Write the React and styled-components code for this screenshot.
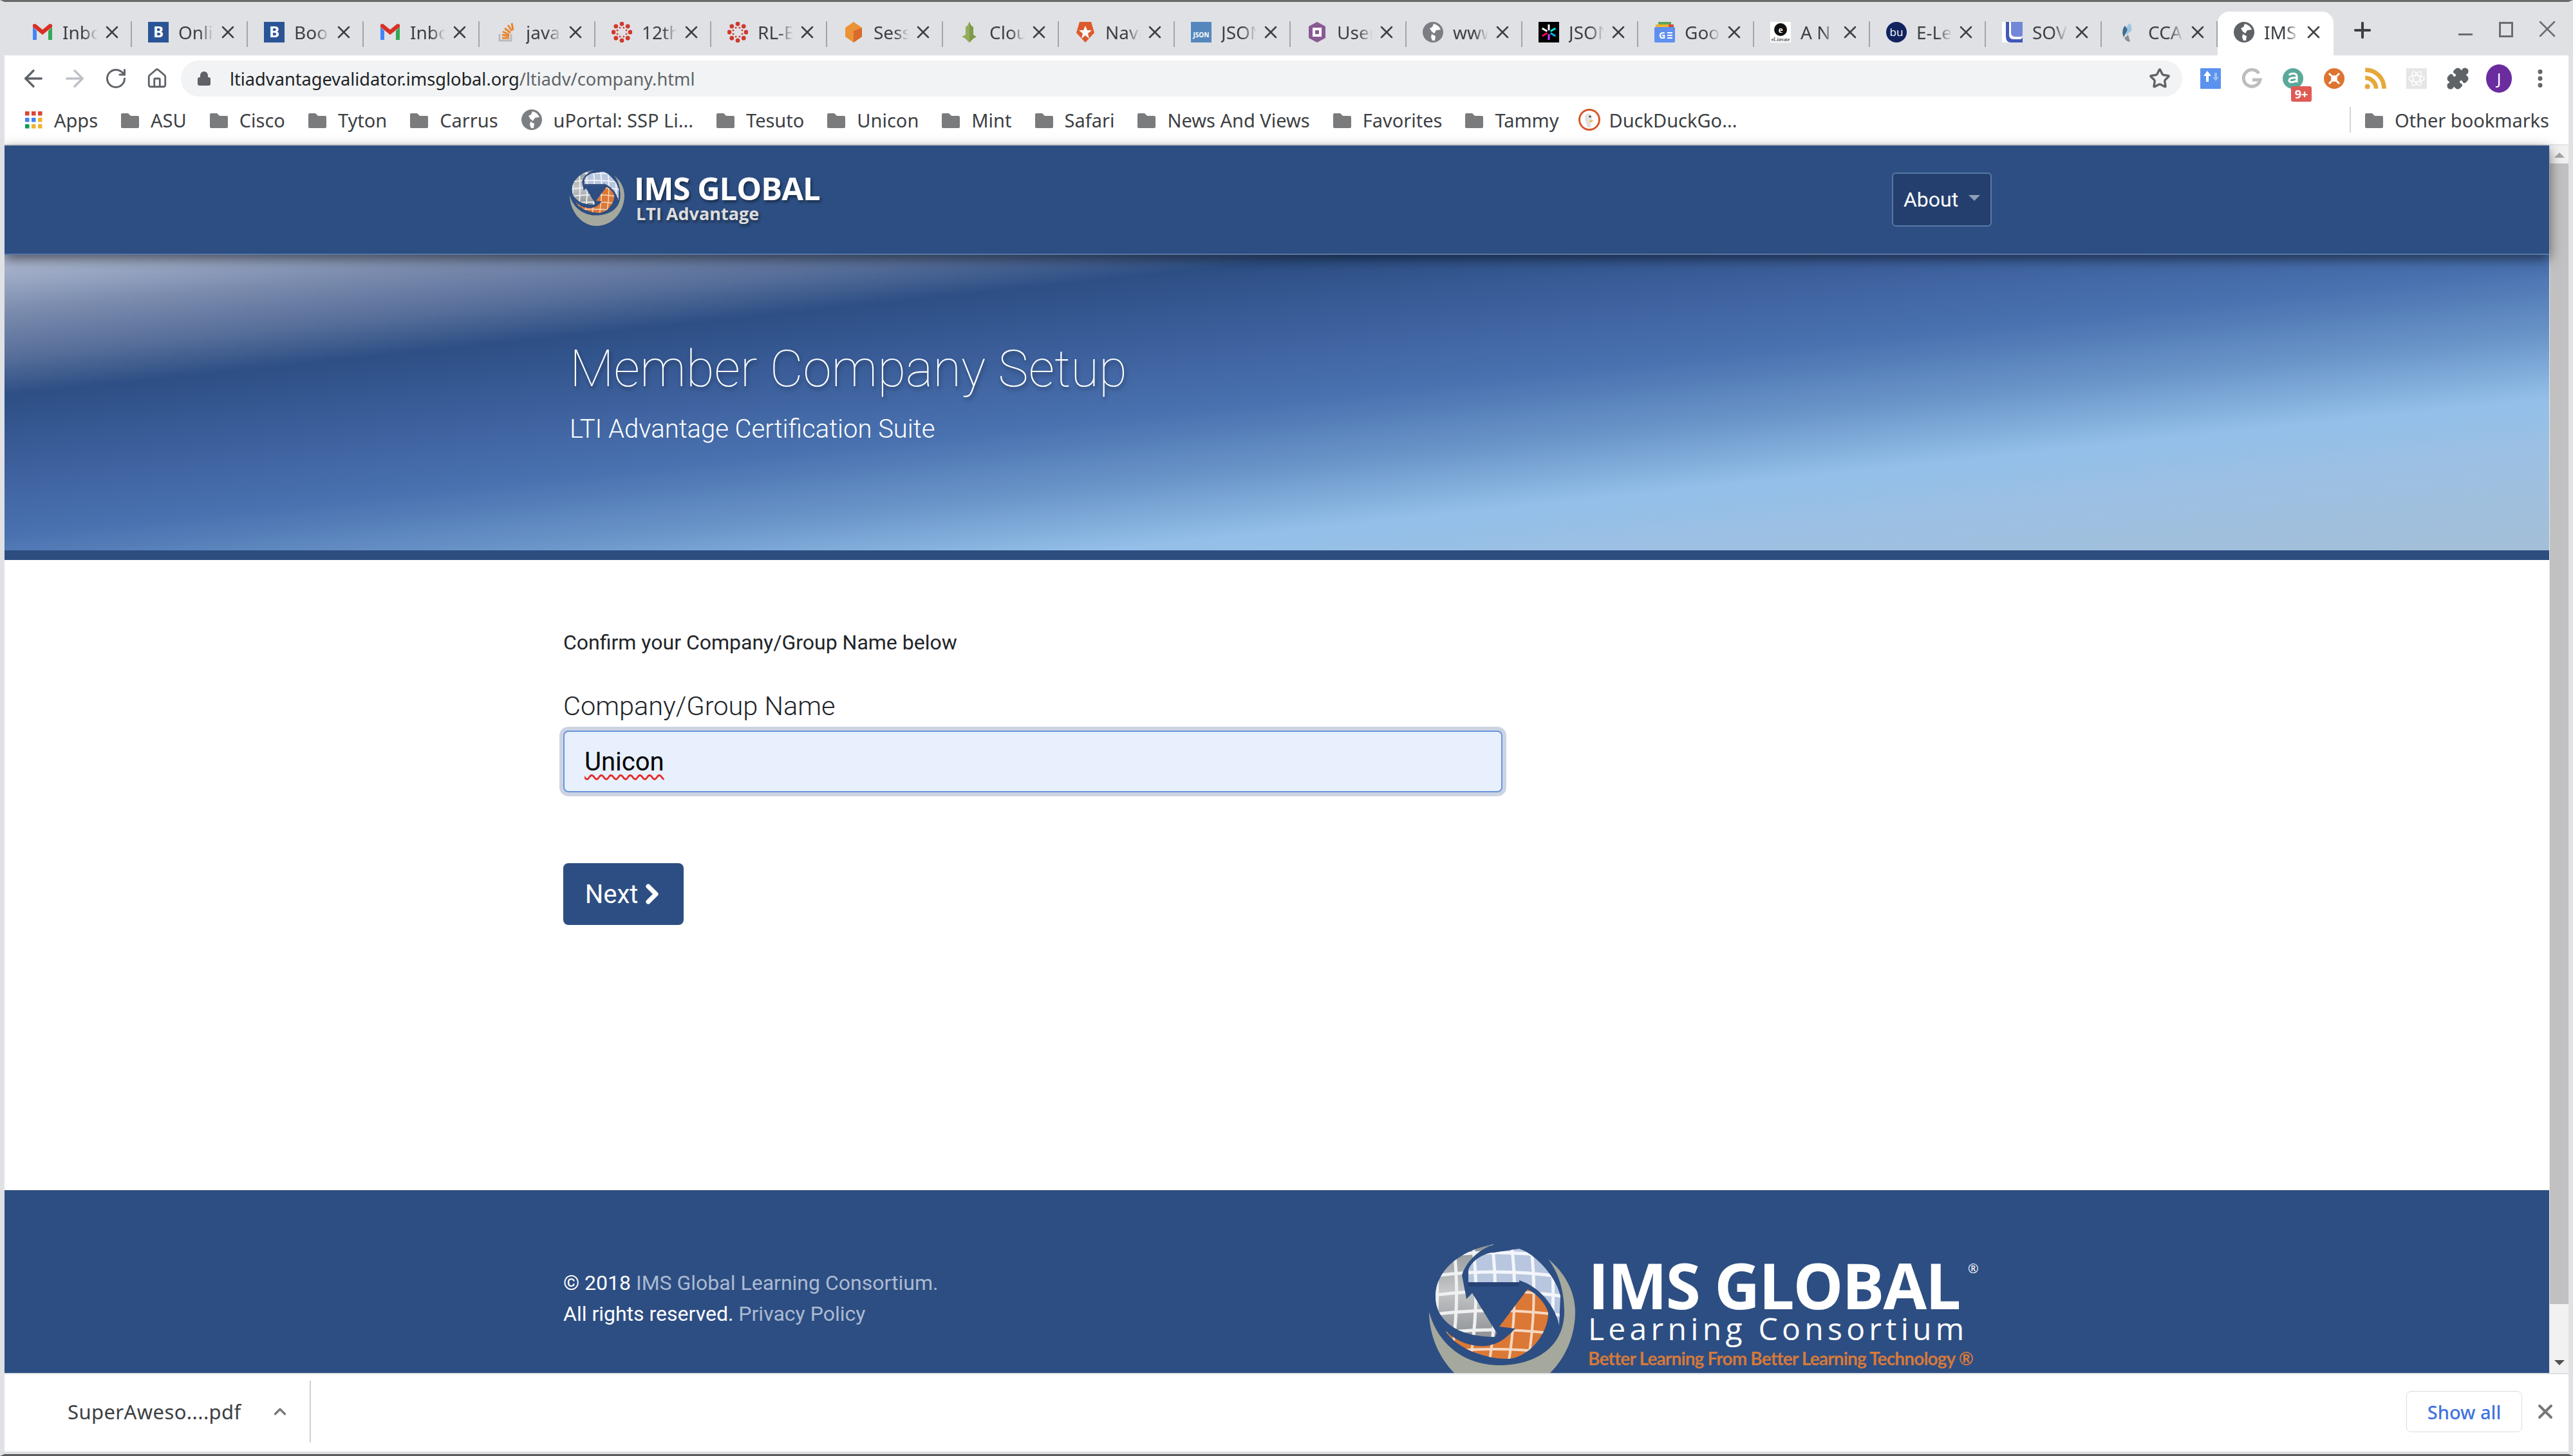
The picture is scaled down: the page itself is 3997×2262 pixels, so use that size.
import styled, { createGlobalStyle } from 'styled-components';
import { ArrowLeft, ArrowRight, RotateCw, Home, Star, Puzzle, MoreVertical, X, Plus, ChevronUp, ChevronRight, Lock } from 'lucide-react';

const GlobalStyle = createGlobalStyle`
  html, body { margin: 0; padding: 0; background: #fff; }
  * { box-sizing: border-box; }
`;

const uiFont = `"Noto Sans", "Open Sans", sans-serif`;
const navy = '#2d4e82';

const Window = styled.div`
  width: 3997px;
  height: 2262px;
  display: flex;
  flex-direction: column;
  overflow: hidden;
  background: #dfe1e5;
  border-top: 3px solid #6a6a6a;
  border-bottom: 3px solid #5c5c5c;
  border-left: 7px solid #dfe1e5;
  border-right: 7px solid #dfe1e5;
  font-family: ${uiFont};
`;

const TabStrip = styled.div`
  height: 83px;
  flex: none;
  display: flex;
  padding-left: 18px;
  position: relative;
`;

const Tab = styled.div`
  width: 180px;
  height: 68px;
  margin-top: 15px;
  flex: none;
  display: flex;
  align-items: center;
  padding: 0 0 4px 25px;
  position: relative;
  background: ${p => (p.$active ? '#fff' : 'transparent')};
  border-radius: 18px 18px 0 0;
  &::after {
    content: '';
    position: absolute;
    right: 0;
    top: 15px;
    height: 40px;
    width: 2px;
    background: ${p => (p.$plain ? 'transparent' : '#a2a5a9')};
  }
`;

const TabIcon = styled.span`
  width: 32px;
  height: 32px;
  flex: none;
  display: block;
`;

const TabTitle = styled.span`
  width: 55px;
  margin-left: 15px;
  flex: none;
  overflow: hidden;
  white-space: nowrap;
  font-size: 28px;
  color: #3c4043;
  -webkit-mask-image: linear-gradient(90deg, #000 60%, transparent 100%);
  mask-image: linear-gradient(90deg, #000 60%, transparent 100%);
`;

const TabClose = styled.span`
  margin: 0 -6px 0 6px;
  display: flex;
  color: #3c4043;
`;

const NewTab = styled.div`
  margin: 25px 0 0 26px;
  height: 40px;
  display: flex;
  color: #3c4043;
`;

const WindowControls = styled.div`
  margin-left: auto;
  display: flex;
  gap: 41px;
  padding: 26px 21px 0 0;
  color: #6a6d70;
`;

const MinIcon = styled.span`
  width: 22px;
  height: 3px;
  margin-top: 23px;
  background: #6a6d70;
`;

const MaxIcon = styled.span`
  width: 22px;
  height: 24px;
  margin-top: 5px;
  border: 3px solid #6a6d70;
`;

const WindowClose = styled.span`
  width: 44px;
  height: 44px;
  margin: -6px -10px 0;
  display: flex;
`;

const Toolbar = styled.div`
  height: 64px;
  flex: none;
  display: flex;
  align-items: center;
  background: #fff;
  padding: 8px 0 0 26px;
`;

const NavButton = styled.span`
  width: 38px;
  height: 38px;
  margin-right: 26px;
  flex: none;
  display: flex;
  align-items: center;
  justify-content: center;
  color: ${p => (p.$off ? '#bdc1c6' : '#5f6368')};
  svg { flex: none; }
`;

const AddressPill = styled.div`
  width: 3109px;
  height: 56px;
  margin-left: -8px;
  flex: none;
  border-radius: 28px;
  background: #f1f3f4;
  display: flex;
  align-items: center;
  padding: 0 18px 0 24px;
  font-size: 27.2px;
  color: #202124;
`;

const UrlPath = styled.span`
  color: #5f6368;
`;

const LockSlot = styled.span`
  display: flex;
  margin-right: 28px;
  color: #5f6368;
`;

const StarSlot = styled.span`
  margin-left: auto;
  display: flex;
  color: #5f6368;
`;

const ExtensionRow = styled.div`
  display: flex;
  align-items: center;
  gap: 24px;
  margin-left: 24px;
`;

const ExtensionSlot = styled.span`
  width: 40px;
  height: 40px;
  flex: none;
  display: flex;
  align-items: center;
  justify-content: center;
  position: relative;
  color: #5f6368;
`;

const CountBadge = styled.span`
  position: absolute;
  right: -9px;
  bottom: -16px;
  width: 32px;
  height: 24px;
  border-radius: 3px;
  background: #df5a55;
  color: #fff;
  font-size: 18px;
  font-weight: 700;
  line-height: 24px;
  text-align: center;
`;

const Avatar = styled.span`
  width: 44px;
  height: 44px;
  border-radius: 50%;
  background: #6a2c9e;
  color: #fff;
  font-size: 24px;
  line-height: 44px;
  text-align: center;
`;

const BookmarkBar = styled.div`
  height: 76px;
  flex: none;
  display: flex;
  align-items: center;
  gap: 36px;
  padding: 0 30px 2px 32px;
  background: #fff;
  border-bottom: 2px solid #e3e3e3;
`;

const Bookmark = styled.div`
  display: flex;
  align-items: center;
  gap: 18px;
  font-size: 29px;
  color: #3c4043;
  white-space: nowrap;
`;

const DuckBookmark = styled(Bookmark)`
  gap: 14px;
  margin-left: -6px;
`;

const OtherBookmarks = styled(Bookmark)`
  margin-left: auto;
  padding-left: 22px;
  border-left: 2px solid #d5d5d5;
  height: 40px;
`;

const Viewport = styled.div`
  flex: 1;
  min-height: 0;
  display: flex;
`;

const Page = styled.div`
  flex: 1;
  min-width: 0;
  display: flex;
  flex-direction: column;
  background: #fff;
  font-family: Roboto, sans-serif;
`;

const Navbar = styled.header`
  height: 170px;
  flex: none;
  display: flex;
  align-items: center;
  justify-content: space-between;
  padding: 0 866px 0 878px;
  background: ${navy};
  border-bottom: 2px solid #5a78a6;
  box-shadow: 0 6px 18px rgba(0, 0, 0, 0.55);
  position: relative;
  z-index: 1;
`;

const BrandLogo = styled.div`
  display: flex;
  align-items: center;
  gap: 15px;
  margin-top: -6px;
`;

const BrandText = styled.div`
  display: flex;
  flex-direction: column;
  font-family: "Open Sans", sans-serif;
  font-weight: 700;
  text-shadow: 2px 3px 4px rgba(0, 0, 0, 0.45);
`;

const BrandName = styled.span`
  font-size: 49px;
  line-height: 50px;
  letter-spacing: -1px;
  color: #fff;
`;

const BrandSub = styled.span`
  font-size: 27px;
  line-height: 30px;
  color: #ddd;
  padding-left: 3px;
`;

const AboutButton = styled.button`
  width: 155px;
  height: 84px;
  display: flex;
  align-items: center;
  justify-content: center;
  gap: 16px;
  padding: 0;
  background: #243f6d;
  border: 2px solid #557aa6;
  border-radius: 6px;
  color: #fff;
  font-family: Roboto, sans-serif;
  font-size: 32px;
`;

const Caret = styled.span`
  width: 0;
  height: 0;
  margin-top: -6px;
  border-left: 9px solid transparent;
  border-right: 9px solid transparent;
  border-top: 9px solid #8f9fb8;
`;

const Hero = styled.section`
  height: 474px;
  flex: none;
  padding: 129px 0 0 878px;
  border-bottom: 15px solid #2d4d80;
  background: linear-gradient(
    174deg,
    #a8b4cd 2%,
    #7b8cae 10%,
    #586f9a 18%,
    #2d4f85 25%,
    #3b5e9a 36%,
    #4a72b0 50%,
    #6b96c9 62%,
    #93bfe9 73%,
    #9dc0e2 84%,
    #a3bed7 100%
  );
`;

const HeroTitle = styled.h1`
  margin: 0;
  font-weight: 100;
  font-size: 80px;
  line-height: 96px;
  color: #fff;
  text-shadow: 2px 4px 6px rgba(0, 0, 0, 0.4);
`;

const HeroSub = styled.p`
  margin: 22px 0 0;
  font-weight: 300;
  font-size: 40px;
  line-height: 48px;
  color: #fff;
`;

const Main = styled.main`
  flex: 1;
  padding: 104px 0 0 868px;
`;

const Intro = styled.p`
  margin: 0;
  font-size: 32px;
  line-height: 48px;
  color: #212529;
`;

const FieldLabel = styled.label`
  display: block;
  margin-top: 47px;
  font-size: 41.5px;
  font-weight: 300;
  line-height: 56px;
  color: #212529;
`;

const NameField = styled.div`
  width: 1459px;
  height: 96px;
  margin-top: 10px;
  display: flex;
  align-items: center;
  padding: 0 31px;
  background: #e8f0fe;
  border: 2px solid #6a94df;
  border-radius: 8px;
  box-shadow: 0 0 0 6px #ccd4e2;
  font-size: 40px;
  color: #000;
`;

const MisspelledWord = styled.span`
  text-decoration: underline wavy #e2302c 2.5px;
  text-underline-offset: 6px;
`;

const NextButton = styled.button`
  width: 187px;
  height: 96px;
  margin-top: 110px;
  display: flex;
  align-items: center;
  justify-content: center;
  padding: 0 0 0 3px;
  background: ${navy};
  border: 0;
  border-radius: 8px;
  color: #fff;
  font-family: Roboto, sans-serif;
  font-size: 40px;
`;

const NextChevron = styled.span`
  display: flex;
  margin: 0 -6px 0 -2px;
`;

const Footer = styled.footer`
  height: 284px;
  flex: none;
  display: flex;
  overflow: hidden;
  padding: 120px 0 0 868px;
  background: ${navy};
  font-size: 32px;
  line-height: 48px;
  color: #fff;
`;

const FooterLink = styled.span`
  color: #abbad2;
`;

const FooterCopy = styled.div`
  width: 1345px;
  flex: none;
`;

const FooterLogo = styled.div`
  display: flex;
  gap: 20px;
  margin-top: -36px;
  height: 200px;
  overflow: hidden;
  flex: none;
  font-family: "Open Sans", sans-serif;
`;

const FooterLogoText = styled.div`
  display: flex;
  flex-direction: column;
  position: relative;
  width: 620px;
  padding-top: 21px;
`;

const FooterBrand = styled.div`
  font-size: 98px;
  font-weight: 700;
  line-height: 85px;
  letter-spacing: -2px;
  white-space: nowrap;
`;

const Registered = styled.span`
  position: absolute;
  top: 28px;
  left: 590px;
  font-size: 20px;
  line-height: 20px;
  font-weight: 400;
`;

const FooterOrg = styled.div`
  font-size: 48px;
  line-height: 50px;
  letter-spacing: 6.3px;
  white-space: nowrap;
`;

const FooterTag = styled.div`
  margin-top: 4px;
  font-family: Lato, sans-serif;
  font-size: 28px;
  line-height: 34px;
  font-weight: 700;
  letter-spacing: -0.85px;
  color: #d6793a;
  white-space: nowrap;
`;

const Scrollbar = styled.div`
  width: 30px;
  flex: none;
  display: flex;
  flex-direction: column;
  align-items: center;
  background: #f1f1f1;
  border-left: 1px solid #e8e8e8;
`;

const ScrollArrow = styled.span`
  width: 0;
  height: 0;
  margin: ${p => (p.$down ? 'auto 0 12px' : '11px 0 9px')};
  border-left: 8px solid transparent;
  border-right: 8px solid transparent;
  border-top: ${p => (p.$down ? '8px solid #505050' : '0')};
  border-bottom: ${p => (p.$down ? '0' : '8px solid #a3a3a3')};
`;

const ScrollThumb = styled.div`
  width: 100%;
  height: 1772px;
  background: #c1c1c1;
`;

const DownloadBar = styled.div`
  height: 122px;
  flex: none;
  display: flex;
  align-items: center;
  margin-bottom: 4px;
  padding: 0 0 4px 98px;
  background: #fff;
  border-top: 2px solid #dfe1e5;
  font-size: 31px;
  letter-spacing: 0.4px;
  color: #3c4043;
`;

const FileName = styled.span`
  width: 315px;
  flex: none;
  white-space: nowrap;
`;

const DownloadChevron = styled.span`
  display: flex;
  color: #777;
`;

const DownloadDivider = styled.span`
  width: 2px;
  height: 96px;
  margin-left: 31px;
  background: #cfcfcf;
`;

const ShowAll = styled.button`
  width: 180px;
  height: 64px;
  margin-left: auto;
  background: #fff;
  border: 1.5px solid #dadce0;
  border-radius: 8px;
  color: #4273dd;
  font-family: ${uiFont};
  font-size: 29px;
  font-weight: 500;
  padding: 0;
`;

const DownloadClose = styled.span`
  width: 72px;
  display: flex;
  justify-content: center;
  color: #777;
`;

// favicons, drawn roughly at the size chrome shows them
function Gmail() {
  return (
    <svg viewBox="0 0 32 32" width="32" height="32">
      <path d="M1 8v20h6V14z" fill="#4285f4" />
      <path d="M31 8v20h-6V14z" fill="#34a853" />
      <path d="M1 8l15 12L31 8v-4l-4 -1 -11 9L5 3 1 4z" fill="#d93025" />
    </svg>
  );
}

function LetterSquare({ bg, fg, text, size = 24 }) {
  return (
    <svg viewBox="0 0 32 32" width="32" height="32">
      <rect width="32" height="32" fill={bg} />
      <text x="16" y="24" textAnchor="middle" fontSize={size} fontWeight="700" fontFamily="Open Sans" fill={fg}>{text}</text>
    </svg>
  );
}

function StackOverflow() {
  return (
    <svg viewBox="0 0 32 32" width="32" height="32" fill="none">
      <path d="M6 19v10h18V19" stroke="#bcbbbb" strokeWidth="3" />
      <path d="M10 25h11M10 20l11 2M11 15l10 5M14 10l9 7M19 5l6 9M25 2l2 11" stroke="#e8862e" strokeWidth="3" />
    </svg>
  );
}

function Canvas() {
  const dots = [...Array(8).keys()].map(i => (i * Math.PI) / 4);
  return (
    <svg viewBox="0 0 32 32" width="32" height="32" fill="#d1392c">
      {dots.map((a, i) => (
        <g key={i}>
          <circle cx={16 + 13 * Math.cos(a)} cy={16 + 13 * Math.sin(a)} r="3.4" />
          <circle cx={16 + 7.5 * Math.cos(a + 0.39)} cy={16 + 7.5 * Math.sin(a + 0.39)} r="1.4" />
        </g>
      ))}
    </svg>
  );
}

function Hexagon() {
  return (
    <svg viewBox="0 0 32 32" width="32" height="32">
      <path d="M16 0l13 9v14l-13 9-13-9V9z" fill="#ec9237" />
      <path d="M16 14l13-5v14l-13 9z" fill="#d96a2c" />
    </svg>
  );
}

function Bell() {
  return (
    <svg viewBox="0 0 32 32" width="32" height="32">
      <path d="M16 0l3 6 3 2v12l5 3-5 3-6 6-6-6-5-3 5-3V8l3-2z" fill="#7d9a48" />
      <path d="M16 0v32l-6-6-5-3 5-3V8l3-2z" fill="#93ad5c" />
    </svg>
  );
}

function Auth0() {
  return (
    <svg viewBox="0 0 32 32" width="32" height="32">
      <path d="M7 0h18l5 17-14 15L2 17z" fill="#dd5a2c" />
      <path d="M16 6l3 7h7l-6 5 2 8-6-5-6 5 2-8-6-5h7z" fill="#fff" />
    </svg>
  );
}

function OneNote() {
  return (
    <svg viewBox="0 0 32 32" width="32" height="32">
      <path d="M16 0l13 7v18l-13 7-13-7V7z" fill="#8a5a94" />
      <rect x="9" y="9" width="14" height="14" fill="#fff" />
      <rect x="13" y="13" width="6" height="6" fill="#8a5a94" />
    </svg>
  );
}

function GlobeGlyph({ color = '#7b7e82' }) {
  return (
    <svg viewBox="0 0 32 32" width="32" height="32">
      <circle cx="16" cy="16" r="16" fill={color} />
      <path d="M17 3c5 1 9 4 11 9l-7 1-3 5-4-3-3-5 4-2zM14 19l6 3-1 7-4 0-2-5z" fill="#fff" />
    </svg>
  );
}

function Jwt() {
  const spokes = [
    ['#fff', 0], ['#00f2e6', 60], ['#00b9f1', 120], ['#d63aff', 180], ['#fb015b', 240], ['#fff', 300],
  ];
  return (
    <svg viewBox="0 0 32 32" width="32" height="32">
      <rect width="32" height="32" fill="#000" />
      {spokes.map(([c, a]) => (
        <rect key={a} x="14.5" y="4" width="3" height="9" fill={c} transform={`rotate(${a} 16 16)`} />
      ))}
    </svg>
  );
}

function GoogleDocs() {
  return (
    <svg viewBox="0 0 32 32" width="32" height="32">
      <rect x="6" y="0" width="20" height="10" fill="#5aa55b" />
      <rect x="2" y="4" width="28" height="8" fill="#efb32e" />
      <rect x="22" y="4" width="8" height="8" fill="#d9473a" />
      <rect y="8" width="32" height="24" rx="2" fill="#5f8ff0" />
      <text x="12" y="26" textAnchor="middle" fontSize="14" fontWeight="700" fontFamily="Open Sans" fill="#fff">G</text>
      <path d="M20 16h8v2h-8zm0 4h8v2h-8zm0 4h8v2h-8z" fill="#fff" />
    </svg>
  );
}

function ELiterate() {
  return (
    <svg viewBox="0 0 32 32" width="32" height="32">
      <rect width="32" height="32" fill="#fff" />
      <circle cx="16" cy="12" r="10" fill="#111" />
      <text x="16" y="17" textAnchor="middle" fontSize="15" fontWeight="700" fontFamily="Liberation Serif" fill="#fff">e</text>
      <text x="16" y="30" textAnchor="middle" fontSize="8" fontFamily="Liberation Serif" fill="#111">eLiterate</text>
    </svg>
  );
}

function Bu() {
  return (
    <svg viewBox="0 0 32 32" width="32" height="32">
      <circle cx="16" cy="16" r="16" fill="#12235f" />
      <text x="16" y="22" textAnchor="middle" fontSize="17" fontFamily="Open Sans" fill="#fff">bu</text>
    </svg>
  );
}

function Sov() {
  return (
    <svg viewBox="0 0 32 32" width="32" height="32">
      <rect width="32" height="32" fill="#fff" />
      <path d="M6 0h26v32H14C8 32 6 28 6 22z" fill="#3f59b8" />
      <path d="M11 0h21v22c0 3-2 5-5 5h-9c-5 0-7-3-7-7z" fill="#fff" />
      <path d="M14 0h18v20c0 2-1 3-3 3h-8c-4 0-7-2-7-6z" fill="#7287d8" />
    </svg>
  );
}

function Cca() {
  return (
    <svg viewBox="0 0 32 32" width="32" height="32">
      <path d="M18 2c-4 5-7 8-7 14 0 2 1 3 2 4l8-6c1-4 0-9-3-12z" fill="#9dc6e2" />
      <path d="M11 6C7 10 6 18 9 24l6-12z" fill="#3f6d8c" />
      <path d="M10 25c2 4 5 6 9 6l-3-11z" fill="#8a8f93" />
    </svg>
  );
}

function AppsGrid() {
  const colors = ['#db4437', '#db4437', '#db4437', '#4285f4', '#4285f4', '#efb32e', '#0f9d58', '#efb32e', '#efb32e'];
  return (
    <svg viewBox="0 0 27 27" width="27" height="27">
      {colors.map((c, i) => (
        <rect key={i} x={(i % 3) * 10} y={Math.floor(i / 3) * 10} width="6.5" height="6.5" fill={c} />
      ))}
    </svg>
  );
}

function FolderGlyph() {
  return (
    <svg viewBox="0 0 28 28" width="28" height="28" fill="#7a7b7d">
      <path d="M2 4h9l4 4h11a2 2 0 0 1 2 2v15a2 2 0 0 1-2 2H2a2 2 0 0 1-2-2V6a2 2 0 0 1 2-2z" />
    </svg>
  );
}

function DuckGlyph() {
  return (
    <svg viewBox="0 0 34 34" width="34" height="34">
      <circle cx="17" cy="17" r="17" fill="#d5562b" />
      <circle cx="17" cy="17" r="14" fill="#fff" />
      <path d="M11 9c5-4 11 0 10 7l1 5-3 1 1 7h-6c-2-6-6-14-3-20z" fill="#e2e2e2" />
      <path d="M17 18h7l-5 3z" fill="#f0b429" />
      <circle cx="18" cy="12" r="1.6" fill="#333" />
    </svg>
  );
}

function GoogleG() {
  return (
    <svg viewBox="0 0 32 32" width="32" height="32" fill="none">
      <path d="M27 8A13 13 0 1 0 29 18H17" stroke="#bdbdbd" strokeWidth="5" />
    </svg>
  );
}

function Rss() {
  return (
    <svg viewBox="0 0 32 32" width="36" height="36" fill="none" stroke="#e5a83a" strokeWidth="6">
      <circle cx="5" cy="27" r="2" fill="#e5a83a" strokeWidth="3" />
      <path d="M2 15c8 0 15 7 15 15M2 4c15 0 26 11 26 26" />
    </svg>
  );
}

function OrangeHub() {
  return (
    <svg viewBox="0 0 32 32" width="32" height="32" stroke="#fff" strokeWidth="3">
      <circle cx="16" cy="16" r="16" fill="#dd7430" stroke="none" />
      <path d="M8 8l16 16M24 8L8 24" />
      <circle cx="16" cy="16" r="5" fill="#fff" stroke="none" />
    </svg>
  );
}

function ReactExt() {
  return (
    <svg viewBox="0 0 32 32" width="32" height="32" fill="none" stroke="#fff" strokeWidth="1.4">
      <rect width="32" height="32" fill="#e6e6e6" stroke="none" />
      <ellipse cx="16" cy="16" rx="12" ry="5" />
      <ellipse cx="16" cy="16" rx="12" ry="5" transform="rotate(60 16 16)" />
      <ellipse cx="16" cy="16" rx="12" ry="5" transform="rotate(120 16 16)" />
    </svg>
  );
}

function ExchangeExt() {
  return (
    <svg viewBox="0 0 32 32" width="32" height="32">
      <rect width="32" height="32" rx="1" fill="#5b92ee" />
      <path d="M11 4l6 8h-4v9H9v-9H5z" fill="#fff" />
      <path d="M22 14v-7h4v7h3l-5 6-5-6z" fill="#9cc0f5" />
    </svg>
  );
}

function AnnotateExt() {
  return (
    <svg viewBox="0 0 32 32" width="32" height="32" fill="none">
      <circle cx="16" cy="16" r="16" fill="#5aa99b" />
      <path d="M10 11c2-4 12-4 12 2v9M22 15c-8-1-12 1-12 4s6 4 12 0" stroke="#fff" strokeWidth="3" />
    </svg>
  );
}

// the IMS globe with its swoosh, viewBox in the footer logo's own pixels
function GlobeLogo({ size, id }) {
  const height = Math.round((size * 232) / 227);
  const grid = [];
  for (let i = 0; i < 8; i++) {
    grid.push(<path key={'v' + i} d={`M${i * 30 + 8} 0 Q ${i * 30 + 22} 110 ${i * 30 - 6} 232`} />);
    grid.push(<path key={'h' + i} d={`M0 ${i * 30 + 20} Q 113 ${i * 30 + 4} 227 ${i * 30 + 24}`} />);
  }
  return (
    <svg viewBox="0 0 227 232" width={size} height={height}>
      <defs>
        <linearGradient id={id + 'g'} x1="0" y1="0" x2="0" y2="1">
          <stop offset="0" stopColor="#8f9396" />
          <stop offset="0.5" stopColor="#c4c6c8" />
          <stop offset="1" stopColor="#909396" />
        </linearGradient>
        <clipPath id={id + 'a'}>
          <path d="M102 0C50 8 10 40 10 81c0 35 30 63 92 63l3-6-38-62-9 9-7-37C56 30 75 8 102 0z" />
        </clipPath>
        <clipPath id={id + 'b'}>
          <path d="M61 66V40c5-15 25-27 40-27l39-6c30 10 60 50 64 74l-2 45c-6-30-30-60-62-70v10z" />
        </clipPath>
        <clipPath id={id + 'c'}>
          <path d="M153 70c20 10 32 30 32 38 0 30-30 70-64 70-40 0-82-20-95-43 15 15 38 25 62 23 18-2 30-10 46-27l-25-3z" />
        </clipPath>
      </defs>
      <path d="M0 105c0 65 50 127 110 127 70 0 117-62 117-127 0-30-15-60-42-82 20 27 25 57 25 82 0 55-45 84-105 83C60 187 15 160 0 105z" fill="#a5a89c" />
      <path d="M102 0C50 8 10 40 10 81c0 35 30 63 92 63l3-6-38-62-9 9-7-37C56 30 75 8 102 0z" fill={`url(#${id}g)`} />
      <g clipPath={`url(#${id}a)`} stroke="#eef0f2" strokeWidth="5" fill="none">{grid}</g>
      <path d="M61 66V40c5-15 25-27 40-27l39-6c30 10 60 50 64 74l-2 45c-6-30-30-60-62-70v10z" fill="#b9c6df" />
      <g clipPath={`url(#${id}b)`} stroke="#f2f5fa" strokeWidth="5" fill="none">{grid}</g>
      <path d="M61 66h79v-7H61z" fill="#274275" />
      <path d="M153 70c20 10 32 30 32 38 0 30-30 70-64 70-40 0-82-20-95-43 15 15 38 25 62 23 18-2 30-10 46-27l-25-3z" fill="#dc7836" />
      <g clipPath={`url(#${id}c)`} stroke="#f6d8c2" strokeWidth="4" fill="none">{grid}</g>
    </svg>
  );
}

const tabs = [
  { title: 'Inbox', icon: <Gmail /> },
  { title: 'Online', icon: <LetterSquare bg="#2a5496" fg="#fff" text="B" /> },
  { title: 'Books', icon: <LetterSquare bg="#2a5496" fg="#fff" text="B" /> },
  { title: 'Inbox', icon: <Gmail /> },
  { title: 'javas', icon: <StackOverflow /> },
  { title: '12th', icon: <Canvas /> },
  { title: 'RL-E', icon: <Canvas /> },
  { title: 'Sessi', icon: <Hexagon /> },
  { title: 'Cloud', icon: <Bell /> },
  { title: 'Navi', icon: <Auth0 /> },
  { title: 'JSON', icon: <LetterSquare bg="#5587bd" fg="#fff" text="JSON" size={10} /> },
  { title: 'User', icon: <OneNote /> },
  { title: 'www', icon: <GlobeGlyph /> },
  { title: 'JSON', icon: <Jwt /> },
  { title: 'Goo', icon: <GoogleDocs /> },
  { title: 'A N', icon: <ELiterate /> },
  { title: 'E-Le', icon: <Bu /> },
  { title: 'SOV', icon: <Sov /> },
  { title: 'CCA', icon: <Cca /> },
];

const bookmarks = ['ASU', 'Cisco', 'Tyton', 'Carrus', 'uPortal: SSP Li...', 'Tesuto', 'Unicon', 'Mint', 'Safari', 'News And Views', 'Favorites', 'Tammy'];

function App() {
  return (
    <>
      <GlobalStyle />
      <Window>
        <TabStrip>
          {tabs.map(({ title, icon }, index) => (
            <Tab key={index}>
              <TabIcon>{icon}</TabIcon>
              <TabTitle>{title}</TabTitle>
              <TabClose><X size={32} strokeWidth={1.9} /></TabClose>
            </Tab>
          ))}
          <Tab $active $plain>
            <TabIcon><GlobeGlyph color="#5f6368" /></TabIcon>
            <TabTitle>IMS</TabTitle>
            <TabClose><X size={32} strokeWidth={1.9} /></TabClose>
          </Tab>
          <NewTab><Plus size={38} strokeWidth={2.6} /></NewTab>
          <WindowControls>
            <MinIcon />
            <MaxIcon />
            <WindowClose><X size={44} strokeWidth={1.4} /></WindowClose>
          </WindowControls>
        </TabStrip>

        <Toolbar>
          <NavButton><ArrowLeft size={42} strokeWidth={1.9} /></NavButton>
          <NavButton $off><ArrowRight size={42} strokeWidth={1.9} /></NavButton>
          <NavButton><RotateCw size={36} strokeWidth={2} /></NavButton>
          <NavButton><Home size={34} strokeWidth={2} /></NavButton>
          <AddressPill>
            <LockSlot><Lock size={24} fill="#5f6368" /></LockSlot>
            ltiadvantagevalidator.imsglobal.org<UrlPath>/ltiadv/company.html</UrlPath>
            <StarSlot><Star size={34} strokeWidth={2.4} /></StarSlot>
          </AddressPill>
          <ExtensionRow>
            <ExtensionSlot><ExchangeExt /></ExtensionSlot>
            <ExtensionSlot><GoogleG /></ExtensionSlot>
            <ExtensionSlot><AnnotateExt /><CountBadge>9+</CountBadge></ExtensionSlot>
            <ExtensionSlot><OrangeHub /></ExtensionSlot>
            <ExtensionSlot><Rss /></ExtensionSlot>
            <ExtensionSlot><ReactExt /></ExtensionSlot>
            <ExtensionSlot><Puzzle size={36} fill="#5f6368" /></ExtensionSlot>
            <ExtensionSlot><Avatar>J</Avatar></ExtensionSlot>
            <ExtensionSlot><MoreVertical size={36} strokeWidth={2.6} /></ExtensionSlot>
          </ExtensionRow>
        </Toolbar>

        <BookmarkBar>
          <Bookmark><AppsGrid />Apps</Bookmark>
          {bookmarks.map(name => (
            <Bookmark key={name}>
              {name.startsWith('uPortal') ? <GlobeGlyph /> : <FolderGlyph />}
              {name}
            </Bookmark>
          ))}
          <DuckBookmark><DuckGlyph />DuckDuckGo...</DuckBookmark>
          <OtherBookmarks><FolderGlyph />Other bookmarks</OtherBookmarks>
        </BookmarkBar>

        <Viewport>
          <Page>
            <Navbar>
              <BrandLogo>
                <GlobeLogo size={85} id="head" />
                <BrandText>
                  <BrandName>IMS GLOBAL</BrandName>
                  <BrandSub>LTI Advantage</BrandSub>
                </BrandText>
              </BrandLogo>
              <AboutButton>About<Caret /></AboutButton>
            </Navbar>

            <Hero>
              <HeroTitle>Member Company Setup</HeroTitle>
              <HeroSub>LTI Advantage Certification Suite</HeroSub>
            </Hero>

            <Main>
              <Intro>Confirm your Company/Group Name below</Intro>
              <FieldLabel>Company/Group Name</FieldLabel>
              <NameField><MisspelledWord>Unicon</MisspelledWord></NameField>
              <NextButton>Next<NextChevron><ChevronRight size={48} strokeWidth={3.6} /></NextChevron></NextButton>
            </Main>

            <Footer>
              <FooterCopy>
                © 2018 <FooterLink>IMS Global Learning Consortium.</FooterLink>
                <br />
                All rights reserved. <FooterLink>Privacy Policy</FooterLink>
              </FooterCopy>
              <FooterLogo>
                <GlobeLogo size={227} id="foot" />
                <FooterLogoText>
                  <FooterBrand>IMS GLOBAL</FooterBrand>
                  <Registered>®</Registered>
                  <FooterOrg>Learning Consortium</FooterOrg>
                  <FooterTag>Better Learning From Better Learning Technology ®</FooterTag>
                </FooterLogoText>
              </FooterLogo>
            </Footer>
          </Page>
          <Scrollbar>
            <ScrollArrow />
            <ScrollThumb />
            <ScrollArrow $down />
          </Scrollbar>
        </Viewport>

        <DownloadBar>
          <FileName>SuperAweso....pdf</FileName>
          <DownloadChevron><ChevronUp size={30} strokeWidth={2.6} /></DownloadChevron>
          <DownloadDivider />
          <ShowAll>Show all</ShowAll>
          <DownloadClose><X size={36} strokeWidth={2.6} /></DownloadClose>
        </DownloadBar>
      </Window>
    </>
  );
}

export default App;
